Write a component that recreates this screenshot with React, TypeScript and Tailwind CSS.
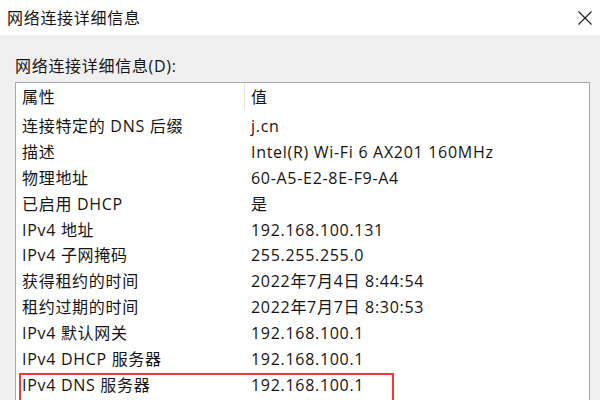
import React from "react";

const rows: [string, string][] = [
  ["连接特定的 DNS 后缀", "j.cn"],
  ["描述", "Intel(R) Wi-Fi 6 AX201 160MHz"],
  ["物理地址", "60-A5-E2-8E-F9-A4"],
  ["已启用 DHCP", "是"],
  ["IPv4 地址", "192.168.100.131"],
  ["IPv4 子网掩码", "255.255.255.0"],
  ["获得租约的时间", "2022年7月4日 8:44:54"],
  ["租约过期的时间", "2022年7月7日 8:30:53"],
  ["IPv4 默认网关", "192.168.100.1"],
  ["IPv4 DHCP 服务器", "192.168.100.1"],
  ["IPv4 DNS 服务器", "192.168.100.1"],
  ["", ""],
];

export default function App() {
  return (
    <div
      className="w-[600px] h-[400px] overflow-hidden flex flex-col bg-[#f0f0f0] text-[#141414] tracking-[0.7px]"
      style={{ fontFamily: '"Open Sans", "Noto Sans CJK SC", sans-serif' }}
    >
      <div className="h-[35px] shrink-0 bg-white flex items-center justify-between pl-[7px] pr-[8px]">
        <span className="text-[16px] leading-none">网络连接详细信息</span>
        <svg width="14" height="14" viewBox="0 0 14 14">
          <path d="M0.5 0.5 L13.5 13.5 M13.5 0.5 L0.5 13.5" stroke="#1a1a1a" strokeWidth="1.1" fill="none" />
        </svg>
      </div>
      <div className="flex-1 flex flex-col pl-[15px] pr-[10px] pt-[20px]">
        <div className="text-[16px] leading-[22px] h-[27px]">网络连接详细信息(D):</div>
        <div className="flex-1 bg-white border border-[#a9a9a9] flex flex-col overflow-hidden">
          <div className="h-[30px] shrink-0 flex items-start text-[16px]">
            <div className="w-[228px] h-[28px] pl-[6px] flex items-center">属性</div>
            <div className="w-px h-[28px] bg-[#e5e5e5]" />
            <div className="pl-[6px] h-[28px] flex items-center">值</div>
          </div>
          {rows.map(([k, v], i) => (
            <div key={i} className="relative h-[25.9px] shrink-0 flex items-center text-[16px] leading-none">
              <div className="w-[229px] pl-[6px] whitespace-nowrap">{k}</div>
              <div className="pl-[6px] whitespace-nowrap">{v}</div>
              {k === "IPv4 DNS 服务器" && (
                <div className="absolute left-[3px] top-[1px] w-[375px] h-[40px] border-[2.5px] border-[#f03838] pointer-events-none" />
              )}
            </div>
          ))}
        </div>
      </div>
    </div>
  );
}
